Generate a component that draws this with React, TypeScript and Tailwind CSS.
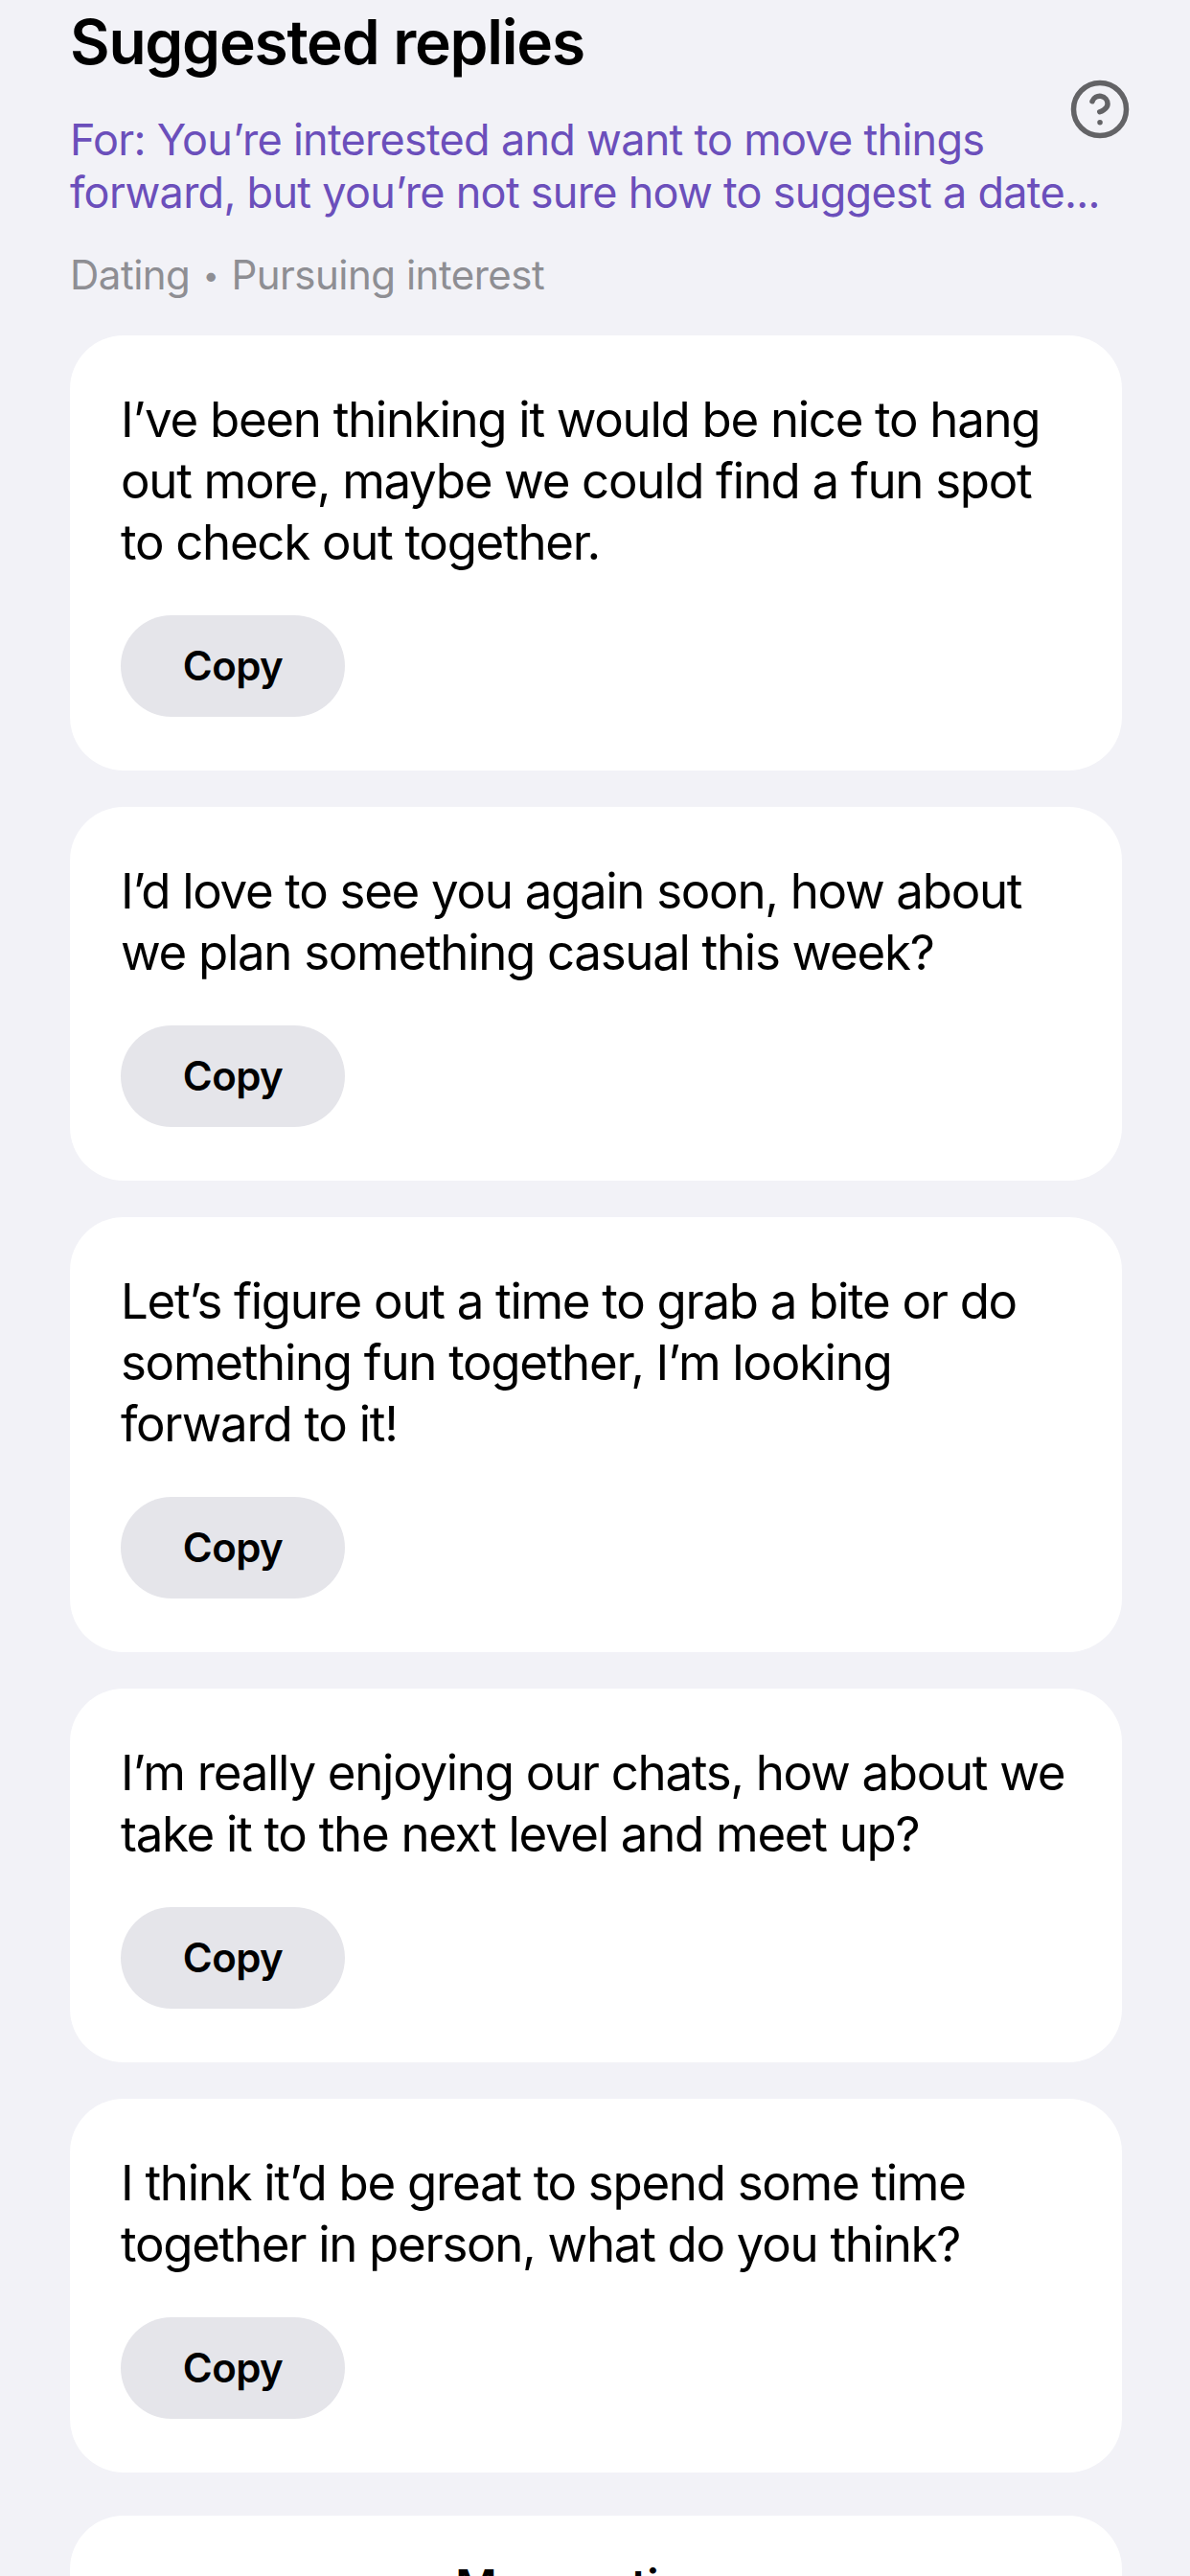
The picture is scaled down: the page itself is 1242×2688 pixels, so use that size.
import { CircleHelp } from 'lucide-react';

const replies = [
    ["I’ve been thinking it would be nice to hang", "out more, maybe we could find a fun spot", "to check out together."],
    ["I’d love to see you again soon, how about", "we plan something casual this week?"],
    ["Let’s figure out a time to grab a bite or do", "something fun together, I’m looking", "forward to it!"],
    ["I’m really enjoying our chats, how about we", "take it to the next level and meet up?"],
    ["I think it’d be great to spend some time", "together in person, what do you think?"],
];

function ReplyCard({ lines }: { lines: string[] }) {
    return (
        <div className="rounded-[56px] bg-white px-[53px] pt-[56px] pb-[56px]">
            <p className="text-[51px] leading-[64px] tracking-[-1.3px] text-black whitespace-nowrap">
                {lines.map((line) => (
                    <span key={line} className="block">{line}</span>
                ))}
            </p>
            <button className="mt-[44px] flex h-[106px] w-[234px] items-center justify-center rounded-[53px] bg-[#e5e5ea] pb-[2px] text-[42px] font-semibold tracking-[-0.6px] text-black">
                Copy
            </button>
        </div>
    );
}

export default function App() {
    return (
        <div className="h-[2688px] overflow-hidden bg-[#f2f2f7] pr-[71px] pl-[73px] font-['Inter','Liberation_Sans',sans-serif]">
            <h1 className="pt-[7px] text-[64px] leading-[74px] font-semibold tracking-[-1.25px] text-black">Suggested replies</h1>
            <div className="relative mt-[37px]">
                <p className="text-[45px] leading-[55px] tracking-[-0.72px] text-[#6b4fbb] whitespace-nowrap">
                    <span className="block">For: You’re interested and want to move things</span>
                    <span className="block">forward, but you’re not sure how to suggest a date...</span>
                </p>
                <CircleHelp className="absolute top-[-37px] left-[1042px] h-[66px] w-[66px] text-[#636366]" strokeWidth={2} />
            </div>
            <p className="mt-[33px] text-[42px] leading-[52px] tracking-[-0.5px] text-[#8e8e93]">
                Dating <span className="mx-[2px] align-[4px] text-[30px] leading-none">•</span> Pursuing interest
            </p>
            <div className="mt-[37px] flex flex-col gap-[38px]">
                {replies.map((lines) => (
                    <ReplyCard key={lines[0]} lines={lines} />
                ))}
                <div className="mt-[7px] flex justify-center rounded-[56px] bg-white pt-[41px] pb-[60px] text-[47px] leading-[64px] font-semibold tracking-[-0.5px] text-black">
                    More options
                </div>
            </div>
        </div>
    );
}
